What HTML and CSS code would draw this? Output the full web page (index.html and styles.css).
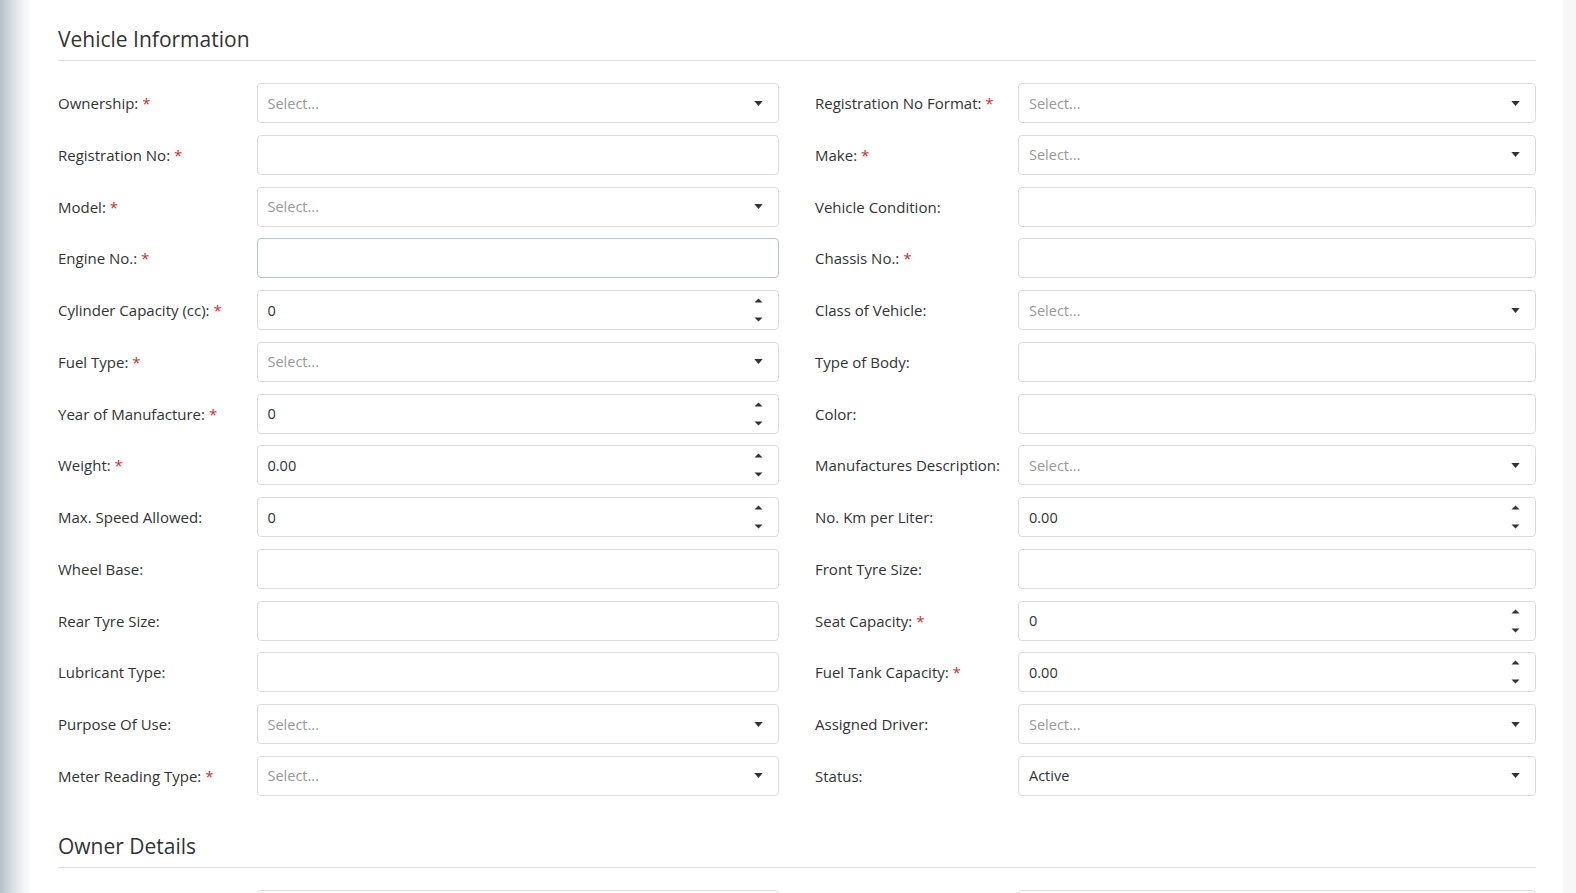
FILE: index.html
```html
<!DOCTYPE html>
<html lang="en">
<head>
    <meta charset="UTF-8">
    <meta name="viewport" content="width=device-width, initial-scale=1.0">
    <title>Vehicle Information</title>
    <link rel="stylesheet" href="styles.css">
</head>
<body>

<div class="layout">
    <aside class="sidebar-edge"></aside>

    <main class="card">
        <!-- Vehicle Information -->
        <section class="section">
            <h2 class="section-title">Vehicle Information</h2>
            <div class="form-grid">
                <div class="field">
                    <label class="field-label">Ownership: <span class="req">*</span></label>
                    <div class="control select"><span class="placeholder">Select...</span><svg class="caret" viewBox="0 0 10 6"><path d="M0 0H10L5 6Z"/></svg></div>
                </div>
                <div class="field">
                    <label class="field-label">Registration No Format: <span class="req">*</span></label>
                    <div class="control select"><span class="placeholder">Select...</span><svg class="caret" viewBox="0 0 10 6"><path d="M0 0H10L5 6Z"/></svg></div>
                </div>

                <div class="field">
                    <label class="field-label">Registration No: <span class="req">*</span></label>
                    <div class="control"></div>
                </div>
                <div class="field">
                    <label class="field-label">Make: <span class="req">*</span></label>
                    <div class="control select"><span class="placeholder">Select...</span><svg class="caret" viewBox="0 0 10 6"><path d="M0 0H10L5 6Z"/></svg></div>
                </div>

                <div class="field">
                    <label class="field-label">Model: <span class="req">*</span></label>
                    <div class="control select"><span class="placeholder">Select...</span><svg class="caret" viewBox="0 0 10 6"><path d="M0 0H10L5 6Z"/></svg></div>
                </div>
                <div class="field">
                    <label class="field-label">Vehicle Condition:</label>
                    <div class="control"></div>
                </div>

                <div class="field">
                    <label class="field-label">Engine No.: <span class="req">*</span></label>
                    <div class="control focused"></div>
                </div>
                <div class="field">
                    <label class="field-label">Chassis No.: <span class="req">*</span></label>
                    <div class="control"></div>
                </div>

                <div class="field">
                    <label class="field-label">Cylinder Capacity (cc): <span class="req">*</span></label>
                    <div class="control number"><span class="value">0</span><svg class="spin" viewBox="0 0 9 24"><path d="M0.5 4.5L4.5 0.5L8.5 4.5Z"/><path d="M0.5 19.5H8.5L4.5 23.5Z"/></svg></div>
                </div>
                <div class="field">
                    <label class="field-label">Class of Vehicle:</label>
                    <div class="control select"><span class="placeholder">Select...</span><svg class="caret" viewBox="0 0 10 6"><path d="M0 0H10L5 6Z"/></svg></div>
                </div>

                <div class="field">
                    <label class="field-label">Fuel Type: <span class="req">*</span></label>
                    <div class="control select"><span class="placeholder">Select...</span><svg class="caret" viewBox="0 0 10 6"><path d="M0 0H10L5 6Z"/></svg></div>
                </div>
                <div class="field">
                    <label class="field-label">Type of Body:</label>
                    <div class="control"></div>
                </div>

                <div class="field">
                    <label class="field-label">Year of Manufacture: <span class="req">*</span></label>
                    <div class="control number"><span class="value">0</span><svg class="spin" viewBox="0 0 9 24"><path d="M0.5 4.5L4.5 0.5L8.5 4.5Z"/><path d="M0.5 19.5H8.5L4.5 23.5Z"/></svg></div>
                </div>
                <div class="field">
                    <label class="field-label">Color:</label>
                    <div class="control"></div>
                </div>

                <div class="field">
                    <label class="field-label">Weight: <span class="req">*</span></label>
                    <div class="control number"><span class="value">0.00</span><svg class="spin" viewBox="0 0 9 24"><path d="M0.5 4.5L4.5 0.5L8.5 4.5Z"/><path d="M0.5 19.5H8.5L4.5 23.5Z"/></svg></div>
                </div>
                <div class="field">
                    <label class="field-label">Manufactures Description:</label>
                    <div class="control select"><span class="placeholder">Select...</span><svg class="caret" viewBox="0 0 10 6"><path d="M0 0H10L5 6Z"/></svg></div>
                </div>

                <div class="field">
                    <label class="field-label">Max. Speed Allowed:</label>
                    <div class="control number"><span class="value">0</span><svg class="spin" viewBox="0 0 9 24"><path d="M0.5 4.5L4.5 0.5L8.5 4.5Z"/><path d="M0.5 19.5H8.5L4.5 23.5Z"/></svg></div>
                </div>
                <div class="field">
                    <label class="field-label">No. Km per Liter:</label>
                    <div class="control number"><span class="value">0.00</span><svg class="spin" viewBox="0 0 9 24"><path d="M0.5 4.5L4.5 0.5L8.5 4.5Z"/><path d="M0.5 19.5H8.5L4.5 23.5Z"/></svg></div>
                </div>

                <div class="field">
                    <label class="field-label">Wheel Base:</label>
                    <div class="control"></div>
                </div>
                <div class="field">
                    <label class="field-label">Front Tyre Size:</label>
                    <div class="control"></div>
                </div>

                <div class="field">
                    <label class="field-label">Rear Tyre Size:</label>
                    <div class="control"></div>
                </div>
                <div class="field">
                    <label class="field-label">Seat Capacity: <span class="req">*</span></label>
                    <div class="control number"><span class="value">0</span><svg class="spin" viewBox="0 0 9 24"><path d="M0.5 4.5L4.5 0.5L8.5 4.5Z"/><path d="M0.5 19.5H8.5L4.5 23.5Z"/></svg></div>
                </div>

                <div class="field">
                    <label class="field-label">Lubricant Type:</label>
                    <div class="control"></div>
                </div>
                <div class="field">
                    <label class="field-label">Fuel Tank Capacity: <span class="req">*</span></label>
                    <div class="control number"><span class="value">0.00</span><svg class="spin" viewBox="0 0 9 24"><path d="M0.5 4.5L4.5 0.5L8.5 4.5Z"/><path d="M0.5 19.5H8.5L4.5 23.5Z"/></svg></div>
                </div>

                <div class="field">
                    <label class="field-label">Purpose Of Use:</label>
                    <div class="control select"><span class="placeholder">Select...</span><svg class="caret" viewBox="0 0 10 6"><path d="M0 0H10L5 6Z"/></svg></div>
                </div>
                <div class="field">
                    <label class="field-label">Assigned Driver:</label>
                    <div class="control select"><span class="placeholder">Select...</span><svg class="caret" viewBox="0 0 10 6"><path d="M0 0H10L5 6Z"/></svg></div>
                </div>

                <div class="field">
                    <label class="field-label">Meter Reading Type: <span class="req">*</span></label>
                    <div class="control select"><span class="placeholder">Select...</span><svg class="caret" viewBox="0 0 10 6"><path d="M0 0H10L5 6Z"/></svg></div>
                </div>
                <div class="field">
                    <label class="field-label">Status:</label>
                    <div class="control select"><span class="value">Active</span><svg class="caret" viewBox="0 0 10 6"><path d="M0 0H10L5 6Z"/></svg></div>
                </div>
            </div>
        </section>

        <!-- Owner Details -->
        <section class="section section-next">
            <h2 class="section-title">Owner Details</h2>
            <div class="form-grid">
                <div class="field">
                    <label class="field-label"></label>
                    <div class="control"></div>
                </div>
                <div class="field">
                    <label class="field-label"></label>
                    <div class="control"></div>
                </div>
            </div>
        </section>
    </main>

    <div class="scroll-gutter"></div>
</div>

</body>
</html>
```

FILE: styles.css
```css
html, body {
    margin: 0;
    height: 100%;
    overflow: hidden;
}
body {
    background-color: #f7f7f7;
    font-family: "Open Sans", "Noto Sans", sans-serif;
    color: #333;
}
.layout {
    display: flex;
    height: 100%;
}
.sidebar-edge {
    width: 30px;
    flex-shrink: 0;
    background: linear-gradient(to right, #b7bec9 0%, #d9dde3 40%, #f3f4f6 80%, #fbfbfc 100%);
}
.card {
    width: 1533px;
    flex-shrink: 0;
    background-color: #fff;
    padding: 23px 27px 0 28px;
    box-sizing: border-box;
}
.scroll-gutter {
    flex: 1;
    background-color: #f7f7f7;
}
.section-title {
    margin: 0;
    font-size: 21px;
    font-weight: 400;
    line-height: 33px;
    padding-bottom: 4px;
    border-bottom: 1px solid #dedede;
    color: #333;
}
.section-next {
    margin-top: 34px;
}
.form-grid {
    display: grid;
    grid-template-columns: 1fr 1fr;
    column-gap: 36px;
    row-gap: 11.75px;
    margin-top: 22px;
}
.field {
    display: grid;
    grid-template-columns: 198.5px 1fr;
    align-items: center;
}
.field:nth-child(even) {
    grid-template-columns: 203px 1fr;
}
.field-label {
    font-size: 15px;
    color: #333;
}
.req {
    color: #c9302c;
}
.control {
    height: 40px;
    box-sizing: border-box;
    border: 1px solid #dcdcdc;
    border-radius: 4px;
    background-color: #fff;
    display: flex;
    align-items: center;
    padding: 0 15px 0 10px;
    font-size: 14.5px;
}
.control.focused {
    border-color: #b7c4d4;
}
.placeholder {
    color: #999;
    flex: 1;
}
.value {
    color: #333;
    flex: 1;
}
.caret {
    width: 9px;
    height: 5px;
    fill: #333;
    margin-left: auto;
}
.spin {
    width: 9px;
    height: 24px;
    fill: #333;
    margin-left: auto;
}
```
